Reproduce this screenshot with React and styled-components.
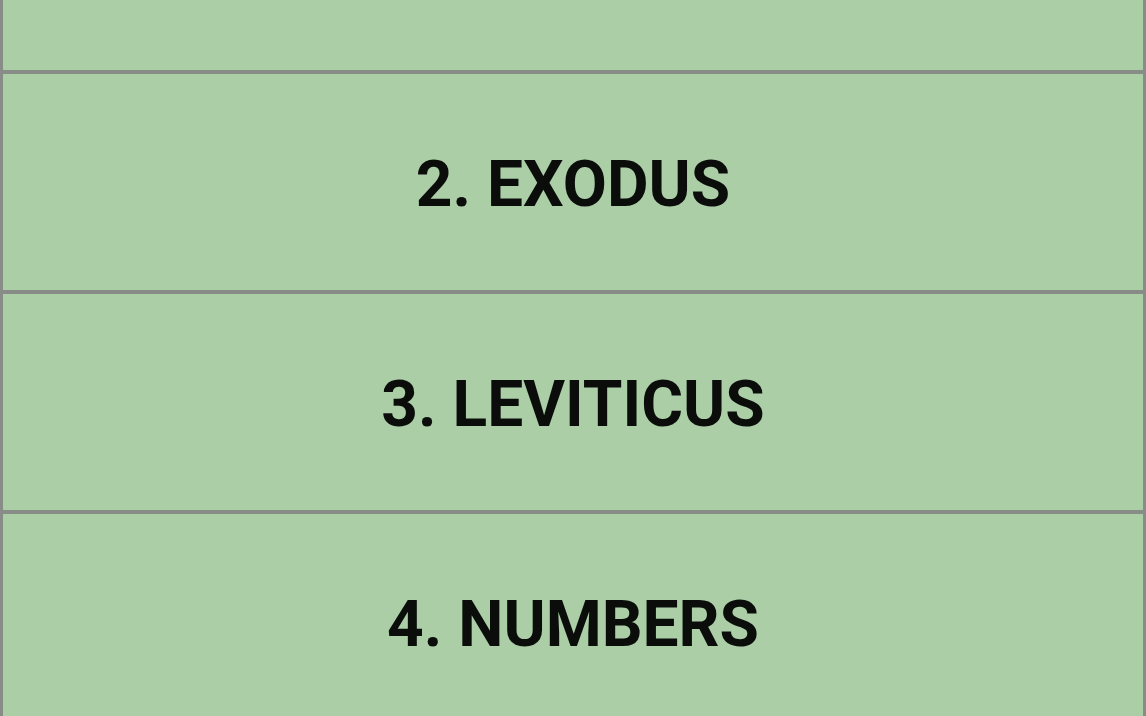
import React from "react";
import styled, { createGlobalStyle } from "styled-components";

const Global = createGlobalStyle`
  html, body {
    margin: 0;
    padding: 0;
    background: #abcea7;
    overflow: hidden;
  }
  body {
    font-family: Roboto, "Liberation Sans", sans-serif;
  }
`;

const Viewport = styled.div`
  width: 1146px;
  height: 716px;
  overflow: hidden;
  background: #abcea7;
`;

const List = styled.ul`
  list-style: none;
  margin: -148px 0 0 0;
  padding: 0;
  display: flex;
  flex-direction: column;
`;

const Item = styled.li`
  box-sizing: border-box;
  flex: none;
  height: 220px;
  display: flex;
  align-items: center;
  justify-content: center;
  background: #abcea7;
  border-style: solid;
  border-color: #878c87;
  border-width: 2px 3px;
  font-family: Roboto, "Liberation Sans", sans-serif;
  font-weight: 700;
  font-size: 64px;
  color: #0b0d0b;
  text-transform: uppercase;
  padding-top: 4px;
`;

const books = ["", "2. Exodus", "3. Leviticus", "4. Numbers"];

export default function App() {
  return (
    <Viewport>
      <Global />
      <List>
        {books.map((b, i) => (
          <Item key={i}>{b}</Item>
        ))}
      </List>
    </Viewport>
  );
}
